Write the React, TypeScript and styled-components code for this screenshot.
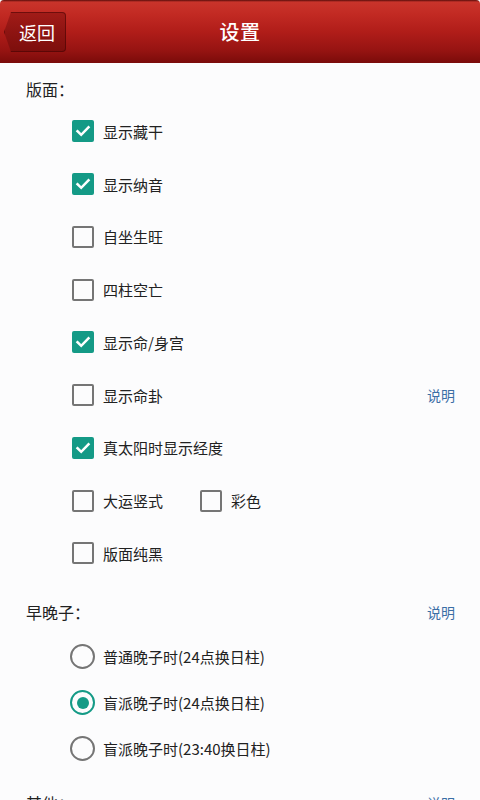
import React from "react";
import styled, { createGlobalStyle } from "styled-components";

const Global = createGlobalStyle`
  html, body { margin: 0; padding: 0; background: #fcfcfd; }
  body { font-family: "Noto Sans CJK SC", "Noto Sans", sans-serif; color: #212121; }
  * { box-sizing: border-box; }
`;

const Page = styled.div`
  width: 480px;
  height: 800px;
  overflow: hidden;
  background: #fcfcfd;
`;

const Header = styled.header`
  height: 63px;
  position: relative;
  display: flex;
  align-items: center;
  justify-content: center;
  background: linear-gradient(180deg, #5a0d0a 0px, #c9342b 2px, #c22a23 14px, #b01d19 32px, #971412 50px, #7a0b0a 63px);
  border-radius: 4px 4px 0 0;
`;

const BackButton = styled.div`
  position: absolute;
  left: 4px;
  top: 12px;
  width: 62px;
  height: 40px;
  display: flex;
  align-items: center;
  justify-content: center;
  padding-left: 4px;
  color: #fff;
  font-size: 18px;
  background: linear-gradient(180deg, #a21c18 0%, #8e1412 50%, #7c0e0c 100%);
  clip-path: polygon(7px 0, 100% 0, 100% 100%, 7px 100%, 0 50%);
  box-shadow: inset 0 0 0 1px rgba(60, 0, 0, 0.5);
  border-radius: 0 4px 4px 0;
`;

const Title = styled.h1`
  margin: 0;
  font-size: 20px;
  font-weight: 500;
  color: #fff;
  letter-spacing: 0.5px;
`;

const Content = styled.main`
  padding-left: 26px;
  padding-right: 25px;
`;

const SectionTitle = styled.div<{ $top: number; $bottom: number }>`
  display: flex;
  justify-content: space-between;
  align-items: center;
  height: 22px;
  margin-top: ${(p) => p.$top}px;
  margin-bottom: ${(p) => p.$bottom}px;
  font-size: 16px;
  color: #212121;
`;

const Link = styled.span`
  font-size: 14px;
  color: #3b6ea5;
`;

const List = styled.div`
  padding-left: 46px;
  display: flex;
  flex-direction: column;
`;

const Row = styled.div<{ $h: number }>`
  height: ${(p) => p.$h}px;
  display: flex;
  align-items: center;
`;

const Item = styled.label<{ $w?: number }>`
  display: flex;
  align-items: center;
  gap: 9px;
  font-size: 15px;
  color: #212121;
  width: ${(p) => (p.$w ? `${p.$w}px` : "auto")};
`;

const Box = styled.span<{ $on: boolean }>`
  width: 22px;
  height: 22px;
  border-radius: 2px;
  display: flex;
  align-items: center;
  justify-content: center;
  background: ${(p) => (p.$on ? "#149a86" : "transparent")};
  border: ${(p) => (p.$on ? "none" : "2.5px solid #757575")};
`;

const RadioCircle = styled.span<{ $on: boolean }>`
  width: 25px;
  height: 25px;
  margin-left: -2px;
  margin-right: -1px;
  border-radius: 50%;
  border: 2.5px solid ${(p) => (p.$on ? "#149a86" : "#757575")};
  display: flex;
  align-items: center;
  justify-content: center;
  &::after {
    content: "";
    display: ${(p) => (p.$on ? "block" : "none")};
    width: 12px;
    height: 12px;
    border-radius: 50%;
    background: #149a86;
  }
`;

const Spacer = styled.div`
  flex: 1;
`;

const Check = ({ on }: { on: boolean }) => (
  <Box $on={on}>
    {on && (
      <svg width="16" height="16" viewBox="0 0 16 16">
        <path d="M2.5 8.2 L6.2 11.8 L13.5 4.3" fill="none" stroke="#fff" strokeWidth="2.5" strokeLinecap="square" />
      </svg>
    )}
  </Box>
);

const CheckItem = ({ on, label, w }: { on: boolean; label: string; w?: number }) => (
  <Item $w={w}>
    <Check on={on} />
    <span>{label}</span>
  </Item>
);

const RadioItem = ({ on, label }: { on: boolean; label: string }) => (
  <Item>
    <RadioCircle $on={on} />
    <span>{label}</span>
  </Item>
);

const ROW = 52.75;

export default function App() {
  return (
    <Page>
      <Global />
      <Header>
        <BackButton>返回</BackButton>
        <Title>设置</Title>
      </Header>
      <Content>
        <SectionTitle $top={15} $bottom={5}>版面：</SectionTitle>
        <List>
          <Row $h={ROW}><CheckItem on label="显示藏干" /></Row>
          <Row $h={ROW}><CheckItem on label="显示纳音" /></Row>
          <Row $h={ROW}><CheckItem on={false} label="自坐生旺" /></Row>
          <Row $h={ROW}><CheckItem on={false} label="四柱空亡" /></Row>
          <Row $h={ROW}><CheckItem on label="显示命/身宫" /></Row>
          <Row $h={ROW}>
            <CheckItem on={false} label="显示命卦" />
            <Spacer />
            <Link>说明</Link>
          </Row>
          <Row $h={ROW}><CheckItem on label="真太阳时显示经度" /></Row>
          <Row $h={ROW}>
            <CheckItem on={false} label="大运竖式" w={128} />
            <CheckItem on={false} label="彩色" />
          </Row>
          <Row $h={ROW}><CheckItem on={false} label="版面纯黑" /></Row>
        </List>
        <SectionTitle $top={21} $bottom={11}>
          <span>早晚子：</span>
          <Link>说明</Link>
        </SectionTitle>
        <List>
          <Row $h={46}><RadioItem on={false} label="普通晚子时(24点换日柱)" /></Row>
          <Row $h={46}><RadioItem on label="盲派晚子时(24点换日柱)" /></Row>
          <Row $h={46}><RadioItem on={false} label="盲派晚子时(23:40换日柱)" /></Row>
        </List>
        <SectionTitle $top={20} $bottom={0}>
          <span>其他：</span>
          <Link>说明</Link>
        </SectionTitle>
      </Content>
    </Page>
  );
}
